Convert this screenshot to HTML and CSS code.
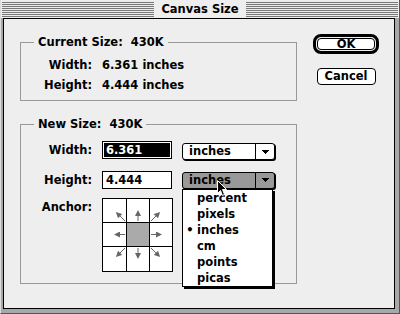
FILE: index.html
```html
<!DOCTYPE html>
<html lang="en">
<head>
  <meta charset="UTF-8">
  <title>Canvas Size</title>
  <link rel="stylesheet" href="styles.css">
</head>
<body>
  <div class="window">
    <div class="titlebar">
      <div class="stripes"><span class="title">Canvas Size</span></div>
    </div>

    <div class="frame">
      <div class="dialog">
        <div class="groups">
          <section class="group current">
            <div class="group-title">Current Size:&nbsp; 430K</div>
            <div class="info">
              <span class="label">Width:</span><span>6.361 inches</span>
              <span class="label">Height:</span><span>4.444 inches</span>
            </div>
          </section>

          <section class="group new">
            <div class="group-title">New Size:&nbsp; 430K</div>

            <div class="field row-width">
              <span class="label">Width:</span>
              <div class="textbox"><span class="sel">6.361</span></div>
              <div class="popup">
                <span class="popup-text">inches</span>
                <span class="popup-arrow">
                  <svg width="7" height="4" viewBox="0 0 7 4"><polygon points="0,0 7,0 3.5,4" fill="#000"/></svg>
                </span>
              </div>
            </div>

            <div class="field row-height">
              <span class="label">Height:</span>
              <div class="textbox"><span class="plain">4.444</span></div>
              <div class="popup open">
                <span class="popup-text">inches</span>
                <span class="popup-arrow">
                  <svg width="7" height="4" viewBox="0 0 7 4"><polygon points="0,0 7,0 3.5,4" fill="#000"/></svg>
                </span>
                <ul class="menu">
                  <li><span class="mark"></span>percent</li>
                  <li><span class="mark"></span>pixels</li>
                  <li><span class="mark">•</span>inches</li>
                  <li><span class="mark"></span>cm</li>
                  <li><span class="mark"></span>points</li>
                  <li><span class="mark"></span>picas</li>
                </ul>
                <svg class="cursor" width="11" height="17" viewBox="0 0 11 17">
                  <path d="M0.5 0.5 L0.5 13.5 L3.5 10.5 L5.5 15.5 L7.5 14.5 L5.5 9.5 L9.5 9.5 Z" fill="#000" stroke="#fff" stroke-width="1"/>
                </svg>
              </div>
            </div>

            <div class="field row-anchor">
              <span class="label anchor-label">Anchor:</span>
              <svg class="anchor" width="71" height="74" viewBox="0 0 71 74">
                <defs>
                  <marker id="head" viewBox="0 0 6 6" refX="3" refY="3" markerWidth="6" markerHeight="6" markerUnits="userSpaceOnUse" orient="auto">
                    <path d="M0 0 L6 3 L0 6 Z" fill="#666"/>
                  </marker>
                </defs>
                <rect x="0.5" y="0.5" width="70" height="73" fill="#fff"/>
                <rect x="24.5" y="24.5" width="23" height="24" fill="#aaa"/>
                <g stroke="#000" stroke-width="1" fill="none">
                  <rect x="0.5" y="0.5" width="70" height="73"/>
                  <path d="M24.5 0 V74 M47.5 0 V74 M0 24.5 H71 M0 48.5 H71"/>
                </g>
                <g stroke="#666" stroke-width="1" marker-end="url(#head)">
                  <path d="M23 36.5 H15"/>
                  <path d="M49 36.5 H57"/>
                  <path d="M36 23 V15"/>
                  <path d="M36 50 V58"/>
                  <path d="M23 23 L16 16"/>
                  <path d="M49 23 L56 16"/>
                  <path d="M23 50 L16 57"/>
                  <path d="M49 50 L56 57"/>
                </g>
              </svg>
            </div>
          </section>
        </div>

        <div class="buttons">
          <div class="ring"><button class="btn ok">OK</button></div>
          <button class="btn cancel">Cancel</button>
        </div>
      </div>
    </div>
  </div>
</body>
</html>
```

FILE: styles.css
```css
body {
  margin: 0;
  font-family: "DejaVu Sans", sans-serif;
  font-weight: bold;
  font-size: 11.5px;
  color: #000;
}

.window {
  width: 400px;
  height: 314px;
  box-sizing: border-box;
  display: flex;
  flex-direction: column;
  background: #a8a8a8;
  border-right: 1px solid #555;
  border-bottom: 1px solid #555;
  border-left: 1px solid #ddd;
}

/* title bar */
.titlebar {
  height: 18px;
  box-sizing: border-box;
  padding: 2px 1px 1px 1px;
  background: #eee;
}

.stripes {
  height: 15px;
  display: flex;
  justify-content: center;
  background: repeating-linear-gradient(to bottom, #777 0 1px, #eee 1px 2px);
}

.title {
  padding: 0 7px;
  line-height: 15px;
  background: #eee;
}

.frame {
  flex: 1;
  padding: 0 4px 4px 2px;
}

.dialog {
  height: 100%;
  box-sizing: border-box;
  display: flex;
  border: 1px solid #000;
  background: #eee;
}

/* group boxes */
.groups {
  width: 277px;
  padding: 23px 0 0 16px;
}

.group {
  border: 1px solid #999;
}

.group-title {
  display: table;
  margin: -8px 0 0 13px;
  padding: 0 4px;
  line-height: 14px;
  background: #eee;
}

.new {
  margin-top: 23px;
}

.info {
  display: grid;
  grid-template-columns: 71px auto;
  column-gap: 10px;
  margin-top: 6px;
  padding-bottom: 5px;
  line-height: 20px;
}

.label {
  text-align: right;
}

.field {
  display: flex;
  align-items: center;
}

.field .label {
  width: 71px;
  margin-right: 10px;
  flex: none;
}

.row-width {
  height: 18px;
  margin-top: 10px;
}

.row-height {
  height: 18px;
  margin-top: 12px;
}

.row-anchor {
  align-items: flex-start;
  margin-top: 9px;
  padding-bottom: 11px;
}

.anchor-label {
  line-height: 14px;
  padding-top: 2px;
}

.anchor {
  display: block;
}

/* text boxes */
.textbox {
  width: 70px;
  height: 18px;
  box-sizing: border-box;
  padding: 1px;
  border: 1px solid #000;
  background: #fff;
  line-height: 14px;
  flex: none;
}

.textbox .sel,
.textbox .plain {
  display: block;
  height: 100%;
  padding-left: 2px;
}

.textbox .sel {
  background: #000;
  color: #fff;
}

/* popup menus */
.popup {
  position: relative;
  display: flex;
  width: 93px;
  height: 17px;
  box-sizing: border-box;
  margin-left: 10px;
  border: 1px solid #000;
  border-radius: 3px;
  background: #fff;
  box-shadow: 1px 1px 0 #000;
}

.row-width .popup {
  margin-top: 3px;
}

.popup.open {
  background: #999;
}

.popup-text {
  flex: 1;
  padding-left: 6px;
  line-height: 15px;
}

.popup-arrow {
  width: 18px;
  display: flex;
  align-items: center;
  justify-content: center;
  border-left: 1px solid #000;
}

.popup-arrow svg {
  display: block;
  shape-rendering: crispEdges;
}

.menu {
  position: absolute;
  top: 16px;
  left: -1px;
  z-index: 2;
  width: 91px;
  box-sizing: border-box;
  margin: 0;
  padding: 0;
  list-style: none;
  border: 1px solid #000;
  background: #fff;
  box-shadow: 2px 2px 0 #000;
}

.menu li {
  display: flex;
  height: 16px;
  line-height: 16px;
}

.mark {
  width: 14px;
  text-align: center;
}

.cursor {
  position: absolute;
  left: 34px;
  top: 7px;
  z-index: 3;
}

/* buttons */
.buttons {
  width: 66px;
  margin-left: 16px;
  padding-top: 15px;
  display: flex;
  flex-direction: column;
  align-items: center;
  gap: 14px;
}

.ring {
  border: 3px solid #000;
  border-radius: 8px;
  padding: 1px;
}

.btn {
  display: block;
  padding: 0;
  box-sizing: border-box;
  font: inherit;
  color: #000;
  border: 1px solid #000;
  border-radius: 4px;
  background: #fff;
}

.ok {
  width: 58px;
  height: 12px;
  line-height: 10px;
}

.cancel {
  width: 59px;
  height: 17px;
  line-height: 15px;
}
```
